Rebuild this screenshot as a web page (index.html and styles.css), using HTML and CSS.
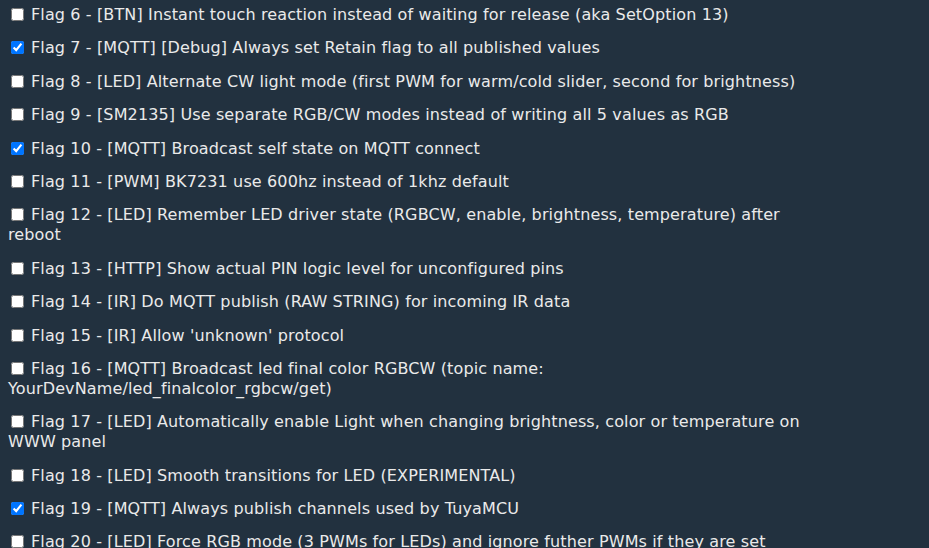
FILE: index.html
```html
<!DOCTYPE html>
<html>
<head>
<meta charset="utf-8">
<link rel="stylesheet" href="styles.css">
</head>
<body>
<div class="flags">
  <div class="flag"><input type="checkbox" id="flag6"><label for="flag6">Flag 6 - [BTN] Instant touch reaction instead of waiting for release (aka SetOption 13)</label></div>
  <div class="flag"><input type="checkbox" id="flag7" checked><label for="flag7">Flag 7 - [MQTT] [Debug] Always set Retain flag to all published values</label></div>
  <div class="flag"><input type="checkbox" id="flag8"><label for="flag8">Flag 8 - [LED] Alternate CW light mode (first PWM for warm/cold slider, second for brightness)</label></div>
  <div class="flag"><input type="checkbox" id="flag9"><label for="flag9">Flag 9 - [SM2135] Use separate RGB/CW modes instead of writing all 5 values as RGB</label></div>
  <div class="flag"><input type="checkbox" id="flag10" checked><label for="flag10">Flag 10 - [MQTT] Broadcast self state on MQTT connect</label></div>
  <div class="flag"><input type="checkbox" id="flag11"><label for="flag11">Flag 11 - [PWM] BK7231 use 600hz instead of 1khz default</label></div>
  <div class="flag"><input type="checkbox" id="flag12"><label for="flag12">Flag 12 - [LED] Remember LED driver state (RGBCW, enable, brightness, temperature) after reboot</label></div>
  <div class="flag"><input type="checkbox" id="flag13"><label for="flag13">Flag 13 - [HTTP] Show actual PIN logic level for unconfigured pins</label></div>
  <div class="flag"><input type="checkbox" id="flag14"><label for="flag14">Flag 14 - [IR] Do MQTT publish (RAW STRING) for incoming IR data</label></div>
  <div class="flag"><input type="checkbox" id="flag15"><label for="flag15">Flag 15 - [IR] Allow 'unknown' protocol</label></div>
  <div class="flag"><input type="checkbox" id="flag16"><label for="flag16">Flag 16 - [MQTT] Broadcast led final color RGBCW (topic name: YourDevName/led_finalcolor_rgbcw/get)</label></div>
  <div class="flag"><input type="checkbox" id="flag17"><label for="flag17">Flag 17 - [LED] Automatically enable Light when changing brightness, color or temperature on WWW panel</label></div>
  <div class="flag"><input type="checkbox" id="flag18"><label for="flag18">Flag 18 - [LED] Smooth transitions for LED (EXPERIMENTAL)</label></div>
  <div class="flag"><input type="checkbox" id="flag19" checked><label for="flag19">Flag 19 - [MQTT] Always publish channels used by TuyaMCU</label></div>
  <div class="flag"><input type="checkbox" id="flag20"><label for="flag20">Flag 20 - [LED] Force RGB mode (3 PWMs for LEDs) and ignore futher PWMs if they are set</label></div>
</div>
</body>
</html>
```

FILE: styles.css
```css
html, body {
  background: #22313f;
}
body {
  margin: 0;
  padding: 5px 8px 0 8px;
  color: #eaeaea;
  font-family: "DejaVu Sans", Verdana, sans-serif;
  font-size: 16px;
  letter-spacing: 0.13px;
  overflow: hidden;
}
.flags {
  width: 805px;
}
.flag {
  line-height: 20px;
  margin-bottom: 13.4px;
}
.flag:first-child {
  margin-top: 0;
}
.flag input {
  width: 13px;
  height: 13px;
  margin: 0 7px 0 3px;
  vertical-align: -1px;
}
```
